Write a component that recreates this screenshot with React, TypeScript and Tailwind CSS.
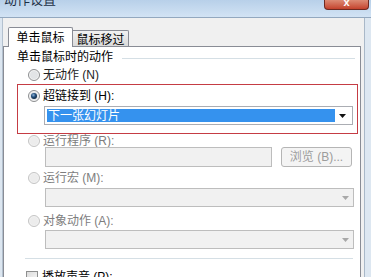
import React from 'react';

const Radio = ({ checked = false, disabled = false }: { checked?: boolean; disabled?: boolean }) => (
  <svg width="12" height="12" viewBox="0 0 12 12" className="shrink-0">
    <defs>
      <radialGradient id={checked ? 'rdot' : 'rnone'} cx="0.4" cy="0.35" r="0.7">
        <stop offset="0" stopColor="#8fb3d8" />
        <stop offset="0.5" stopColor="#1f4c7a" />
        <stop offset="1" stopColor="#0d2339" />
      </radialGradient>
    </defs>
    <circle cx="6" cy="6" r="5.5" fill={disabled ? '#f2f2f2' : '#f4f4f4'} stroke={disabled ? '#c4c4c4' : '#8c8e90'} />
    <circle cx="6" cy="6" r="4" fill={disabled ? '#ececec' : '#e2e4e6'} />
    {checked && <circle cx="6" cy="6" r="3" fill="url(#rdot)" />}
  </svg>
);

const Arrow = ({ color }: { color: string }) => (
  <svg width="7" height="4" viewBox="0 0 7 4">
    <path d="M0 0 H7 L3.5 4 Z" fill={color} />
  </svg>
);

const DisabledSelect = () => (
  <div className="ml-[41px] w-[309px] h-[19px] flex-none border border-[#bdbdbd] bg-[#f1f1f1] flex items-center justify-end pr-[4px]">
    <Arrow color="#a8a8a8" />
  </div>
);

export default function App() {
  return (
    <div className="w-[371px] h-[277px] overflow-hidden bg-[#f0f0f0] flex flex-col text-[12px] leading-[14px] text-black font-['Liberation_Sans','Noto_Sans_CJK_SC',sans-serif]">
      {/* title bar */}
      <div className="h-[18px] flex-none bg-gradient-to-b from-[#b8d0e9] to-[#d2e3f4] border-b border-[#93a8bf] flex justify-between overflow-hidden">
        <span className="pl-[4px] -mt-[8px] text-[13px] leading-[15px] text-[#1b2e45]">动作设置</span>
        <div className="mr-[2px] w-[45px] h-[10px] rounded-b-[4px] border border-t-0 border-[#6e2a21] bg-gradient-to-b from-[#dc8a74] to-[#c3412c] flex justify-center items-end overflow-hidden">
          <span className="text-white text-[11px] leading-[11px] font-bold mb-[1px]">x</span>
        </div>
      </div>

      <div className="flex-1 flex">
        <div className="w-[3px] flex-none bg-[#dce6f0] border-r border-[#b3c1cf]" />

        <div className="w-[358px] flex-none flex flex-col pt-[9px]">
          {/* tabs */}
          <div className="h-[19px] flex-none flex items-end pl-[5px]">
            <div className="relative z-10 w-[65px] h-[20px] -mb-[1px] bg-white border border-b-0 border-[#898c95] rounded-t-[2px] flex items-center justify-center pt-[0px]">
              单击鼠标
            </div>
            <div className="w-[56px] h-[16px] border border-l-0 border-b-0 border-[#898c95] rounded-tr-[2px] bg-gradient-to-b from-[#f2f2f2] to-[#dadada] flex items-center justify-center pt-[2px]">
              鼠标移过
            </div>
          </div>

          {/* panel */}
          <div className="flex-1 bg-white border border-[#898c95] border-b-0 flex flex-col">
            <div className="h-[20px] flex-none flex items-center pl-[13px] pr-[5px]">
              <span>单击鼠标时的动作</span>
              <div className="flex-1 h-px bg-[#d5dfe5] ml-[9px] mt-[2px]" />
            </div>

            <div className="h-[16px] flex-none flex items-center gap-[3px] pl-[24px] text-[#222]">
              <Radio />
              <span>无动作 (N)</span>
            </div>

            <div className="mt-[1px] ml-[13px] w-[341px] flex-none border border-[#c53c44] flex flex-col pb-[8px]">
              <div className="h-[21px] flex items-center gap-[3px] pl-[10px]">
                <Radio checked />
                <span>超链接到 (H):</span>
              </div>
              <div className="ml-[26px] w-[309px] h-[19px] border border-[#abadb3] bg-white flex items-center p-[2px]">
                <div className="w-[288px] h-full bg-[#3592ee] text-white pl-[1px] flex items-center">下一张幻灯片</div>
                <div className="flex-1 flex justify-center">
                  <Arrow color="#111" />
                </div>
              </div>
            </div>

            <div className="h-[13px] flex-none flex items-center gap-[3px] pl-[24px] text-[#7d7d7d]">
              <Radio disabled />
              <span>运行程序 (R):</span>
            </div>

            <div className="h-[20px] flex-none flex gap-[9px] pl-[41px]">
              <div className="w-[227px] h-full border border-[#bdbdbd] bg-[#f1f1f1]" />
              <div className="w-[71px] h-full border border-[#b5b5b5] rounded-[3px] bg-[#f4f4f4] text-[#9c9c9c] flex items-center justify-center">
                浏览 (B)...
              </div>
            </div>

            <div className="h-[21px] flex-none flex items-center gap-[3px] pl-[24px] text-[#7d7d7d]">
              <Radio disabled />
              <span>运行宏 (M):</span>
            </div>
            <DisabledSelect />

            <div className="h-[23px] flex-none flex items-center gap-[3px] pl-[24px] pt-[4px] text-[#7d7d7d]">
              <Radio disabled />
              <span>对象动作 (A):</span>
            </div>
            <DisabledSelect />

            <div className="mt-[9px] ml-[21px] w-[328px] h-px flex-none bg-[#d5dfe5]" />

            <div className="mt-[10px] h-[16px] flex-none flex items-center gap-[4px] pl-[22px]">
              <div className="w-[12px] h-[12px] border border-[#8e8f8f] bg-gradient-to-br from-[#dcdcdc] to-[#f7f7f7]" />
              <span>播放声音 (P):</span>
            </div>
          </div>
        </div>

        <div className="w-[3px] flex-none" />
        <div className="w-[7px] flex-none bg-[#dde7f1] border-l border-[#a9b8c8]" />
      </div>
    </div>
  );
}
